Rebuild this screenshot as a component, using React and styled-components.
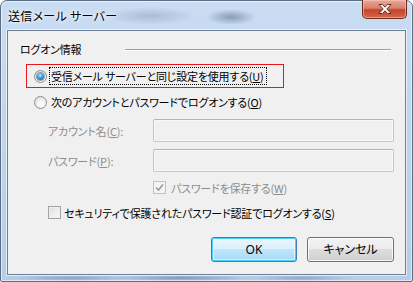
import React from "react";
import styled, { createGlobalStyle, css } from "styled-components";

const Global = createGlobalStyle`
  html, body { margin: 0; padding: 0; background: #fff; }
  body {
    font-family: "Noto Sans CJK JP", "Noto Sans", sans-serif;
    font-size: 11px;
    letter-spacing: -0.2px;
    color: #000;
    font-feature-settings: "palt";
  }
`;

const Window = styled.div`
  box-sizing: border-box;
  width: 413px;
  height: 282px;
  display: flex;
  flex-direction: column;
  padding: 0 6px 6px 6px;
  border: 1px solid #5a6d85;
  border-radius: 7px 7px 2px 2px;
  box-shadow: inset 0 0 0 1px rgba(255, 255, 255, 0.55);
  background:
    radial-gradient(ellipse 45px 9px at 150px 15px, rgba(90, 110, 140, 0.28), transparent),
    radial-gradient(ellipse 25px 8px at 230px 16px, rgba(60, 80, 110, 0.45), transparent),
    radial-gradient(ellipse 70px 3px at 180px 277px, rgba(60, 85, 125, 0.45), transparent),
    radial-gradient(ellipse 60px 3px at 70px 277px, rgba(70, 95, 135, 0.4), transparent),
    radial-gradient(ellipse 50px 3px at 300px 277px, rgba(70, 95, 135, 0.35), transparent),
    linear-gradient(#c9dcf2, #bdd3ec 60%, #b6cde8);
`;

const TitleBar = styled.div`
  height: 29px;
  display: flex;
  justify-content: space-between;
  align-items: flex-start;
`;

const Title = styled.div`
  padding: 7px 0 0 1px;
  font-size: 12px;
  letter-spacing: 0.3px;
  line-height: 16px;
  color: #000;
  text-shadow: 0 0 6px #fff, 0 0 3px #fff;
`;

const CloseButton = styled.div`
  box-sizing: border-box;
  width: 45px;
  height: 19px;
  margin: -1px -1px 0 0;
  display: flex;
  align-items: center;
  justify-content: center;
  border: 1px solid #6a2a20;
  border-top: none;
  border-radius: 0 0 5px 5px;
  background: linear-gradient(#e9a898, #d9806b 45%, #c4422b 55%, #d56a4d);
  box-shadow: inset 0 0 0 1px rgba(255, 210, 200, 0.5);
`;

const Client = styled.div`
  flex: 1;
  display: flex;
  flex-direction: column;
  background: #f0f0f0;
  border: 1px solid #6f8096;
  box-shadow: 0 0 0 1px rgba(255, 255, 255, 0.6);
  padding: 0 11px 0 0;
`;

const Header = styled.div`
  margin: 10px 0 0 12px;
  height: 16px;
  display: flex;
  align-items: center;
  line-height: 16px;
`;

const HeaderLine = styled.div`
  margin-left: auto;
  margin-right: 3px;
  width: 266px;
  height: 1px;
  background: #a0a0a0;
  box-shadow: 0 1px 0 #fff;
`;

const OptionRow = styled.div`
  box-sizing: border-box;
  display: flex;
  align-items: center;
  margin-top: ${(p) => p.$top}px;
  margin-left: 18px;
  height: ${(p) => p.$h}px;
  padding-left: 8px;
  ${(p) =>
    p.$marked &&
    css`
      width: 258px;
      padding-left: 7px;
      border: 1px solid #e8151b;
    `}
`;

const Radio = styled.span`
  box-sizing: border-box;
  width: 13px;
  height: 13px;
  flex: none;
  border-radius: 50%;
  border: 1px solid #8c8f93;
  background: radial-gradient(circle at 60% 65%, #fff 10%, #e2e2e2 70%, #d0d0d0);
  display: flex;
  align-items: center;
  justify-content: center;
  &::after {
    content: "";
    display: ${(p) => (p.$checked ? "block" : "none")};
    width: 7px;
    height: 7px;
    border-radius: 50%;
    background: radial-gradient(circle at 45% 35%, #c6ecff 0, #4bb0e6 35%, #1b6aa3 75%, #0f3f6b);
    box-shadow: 0 0 0 1px rgba(40, 80, 120, 0.5);
  }
`;

const OptionText = styled.span`
  margin-left: ${(p) => (p.$focus ? 3 : 4)}px;
  line-height: 16px;
  white-space: nowrap;
  ${(p) =>
    p.$focus &&
    css`
      outline: 1px dotted #000;
      outline-offset: 0;
      padding: 0 2px 0 1px;
    `}
`;

const FieldRow = styled.div`
  display: flex;
  align-items: center;
  margin: 7px 0 0 40px;
  height: 23px;
`;

const FieldLabel = styled.span`
  width: 105px;
  flex: none;
  color: #8d8d8d;
  line-height: 16px;
`;

const Input = styled.div`
  box-sizing: border-box;
  flex: 1;
  height: 23px;
  border: 1px solid #c6c6c6;
  border-top-color: #b4b4b4;
  border-radius: 2px;
  background: #f0f0f0;
  box-shadow: inset 0 0 0 1px #f7f7f7;
`;

const CheckRow = styled.div`
  display: flex;
  align-items: center;
  margin: ${(p) => p.$top}px 0 0 ${(p) => p.$left}px;
  height: 13px;
`;

const CheckBox = styled.span`
  box-sizing: border-box;
  width: 13px;
  height: 13px;
  flex: none;
  border: 1px solid ${(p) => (p.$disabled ? "#c2c2c2" : "#a3a3a3")};
  background: ${(p) =>
    p.$disabled ? "#f4f4f4" : "linear-gradient(135deg, #dedede, #fafafa)"};
  box-shadow: inset 0 0 0 1px ${(p) => (p.$disabled ? "#f4f4f4" : "#f0f0f0")};
  display: flex;
  align-items: center;
  justify-content: center;
`;

const CheckText = styled.span`
  margin-left: ${(p) => p.$gap}px;
  line-height: 16px;
  white-space: nowrap;
  color: ${(p) => (p.$disabled ? "#8d8d8d" : "#000")};
`;

const ButtonRow = styled.div`
  display: flex;
  justify-content: flex-end;
  gap: 10px;
  margin-top: 18px;
`;

const Button = styled.div`
  box-sizing: border-box;
  width: ${(p) => p.$w}px;
  height: 25px;
  display: flex;
  align-items: center;
  justify-content: center;
  border-radius: 3px;
  font-family: "Noto Sans", "Noto Sans CJK JP", sans-serif;
  font-size: 12px;
  letter-spacing: 0;
  line-height: 16px;
  ${(p) =>
    p.$default
      ? css`
          border: 1px solid #3c7fb1;
          background: linear-gradient(#eaf6fd, #d9f0fc 50%, #bee6fd 50%, #a7d9f5);
          box-shadow: inset 0 0 0 1px #48d0f7, inset 0 0 0 2px rgba(255, 255, 255, 0.5);
        `
      : css`
          border: 1px solid #707070;
          background: linear-gradient(#f2f2f2, #ebebeb 50%, #dddddd 50%, #cfcfcf);
          box-shadow: inset 0 0 0 1px rgba(255, 255, 255, 0.8);
        `}
`;

function CloseGlyph() {
  return (
    <svg width="14" height="12" viewBox="0 0 14 12">
      <path
        d="M1 1.5 L4.5 1.5 L7 4.2 L9.5 1.5 L13 1.5 L8.8 6 L13 10.5 L9.5 10.5 L7 7.8 L4.5 10.5 L1 10.5 L5.2 6 Z"
        fill="#fff"
        stroke="#4a2420"
        strokeWidth="0.9"
        strokeLinejoin="round"
      />
    </svg>
  );
}

function Tick() {
  return (
    <svg width="9" height="9" viewBox="0 0 9 9">
      <path d="M1 4.5 L3.5 7 L8 1.5" fill="none" stroke="#9a9a9a" strokeWidth="1.6" />
    </svg>
  );
}

export default function App() {
  return (
    <>
      <Global />
      <Window>
        <TitleBar>
          <Title>送信メール サーバー</Title>
          <CloseButton>
            <CloseGlyph />
          </CloseButton>
        </TitleBar>
        <Client>
          <Header>
            ログオン情報
            <HeaderLine />
          </Header>

          <OptionRow $marked $top={7} $h={24}>
            <Radio $checked />
            <OptionText $focus>
              受信メール サーバーと同じ設定を使用する(<u>U</u>)
            </OptionText>
          </OptionRow>

          <OptionRow $top={4} $h={20}>
            <Radio />
            <OptionText>
              次のアカウントとパスワードでログオンする(<u>O</u>)
            </OptionText>
          </OptionRow>

          <FieldRow>
            <FieldLabel>
              アカウント名(<u>C</u>):
            </FieldLabel>
            <Input />
          </FieldRow>

          <FieldRow>
            <FieldLabel>
              パスワード(<u>P</u>):
            </FieldLabel>
            <Input />
          </FieldRow>

          <CheckRow $top={9} $left={145}>
            <CheckBox $disabled>
              <Tick />
            </CheckBox>
            <CheckText $disabled $gap={5}>
              パスワードを保存する(<u>W</u>)
            </CheckText>
          </CheckRow>

          <CheckRow $top={12} $left={40}>
            <CheckBox />
            <CheckText $gap={3}>
              セキュリティで保護されたパスワード認証でログオンする(<u>S</u>)
            </CheckText>
          </CheckRow>

          <ButtonRow>
            <Button $default $w={86}>
              OK
            </Button>
            <Button $w={87}>キャンセル</Button>
          </ButtonRow>
        </Client>
      </Window>
    </>
  );
}
